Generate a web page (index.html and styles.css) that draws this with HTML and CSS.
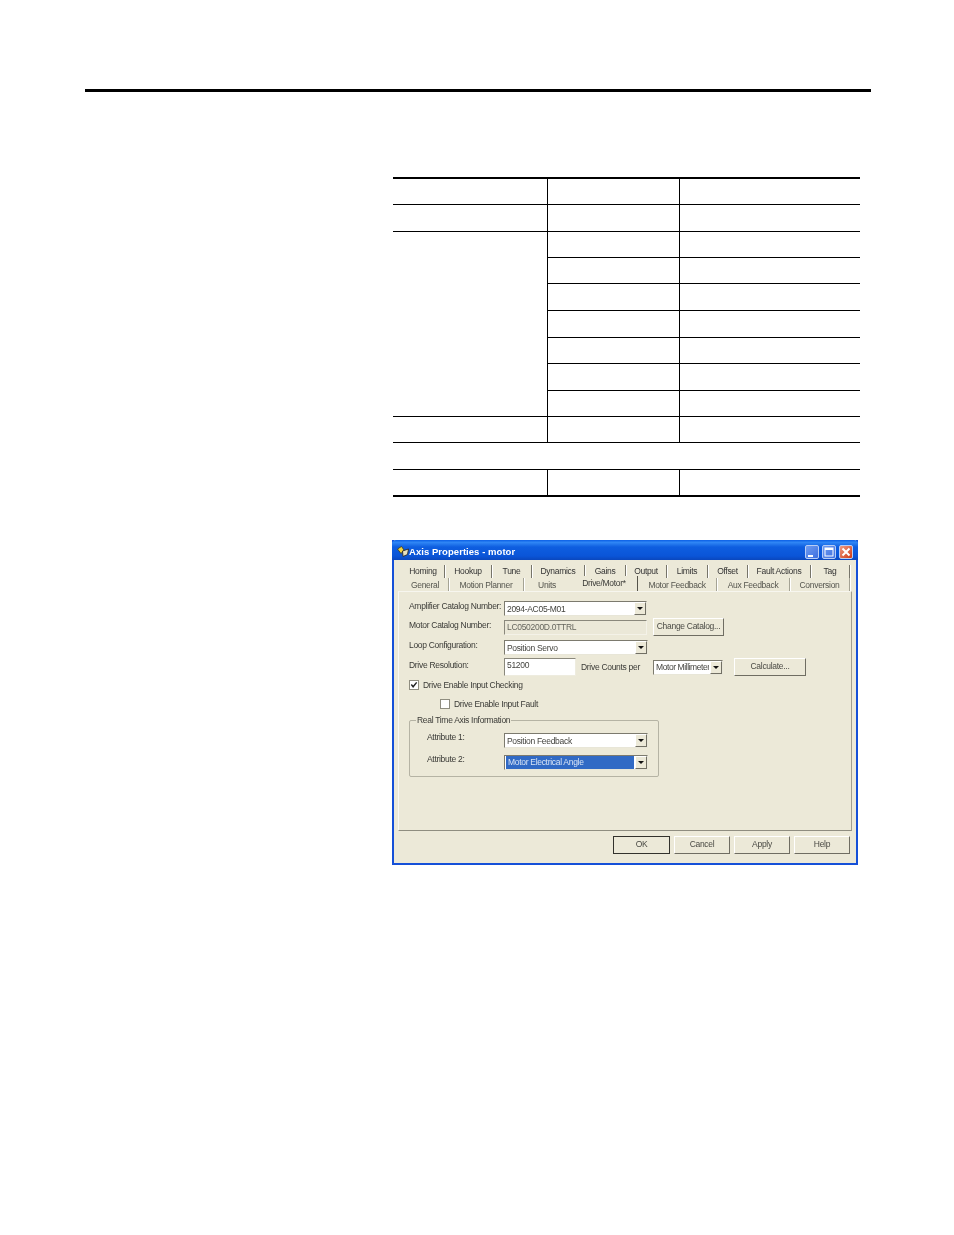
FILE: index.html
```html
<!DOCTYPE html>
<html lang="en">
<head>
<meta charset="utf-8">
<title>Axis Properties</title>
<link rel="stylesheet" href="styles.css">
</head>
<body>
<div class="rule"></div>
<table class="specs">
  <tr class="r26"><td class="c1"></td><td class="c2"></td><td class="c3"></td></tr>
  <tr class="r27"><td></td><td></td><td></td></tr>
  <tr class="r26"><td rowspan="7"></td><td></td><td></td></tr>
  <tr class="r26"><td></td><td></td></tr>
  <tr class="r27"><td></td><td></td></tr>
  <tr class="r27"><td></td><td></td></tr>
  <tr class="r26"><td></td><td></td></tr>
  <tr class="r27"><td></td><td></td></tr>
  <tr class="r26"><td></td><td></td></tr>
  <tr class="r26"><td></td><td></td><td></td></tr>
  <tr class="r27"><td colspan="3"></td></tr>
  <tr class="r27 last"><td></td><td></td><td></td></tr>
</table>

<div class="dialog">
  <div class="titlebar">
    <svg class="appicon" width="12" height="12" viewBox="0 0 12 12"><path d="M0.5 3 L4.5 0.5 L7 4 L4 7.5 Z" fill="#f4d23c" stroke="#3a3a1a" stroke-width=".8"/><path d="M5.5 5 L11.5 3 L10.5 8.5 L6 10.5 Z" fill="#e8e2c0" stroke="#2a2a2a" stroke-width=".9"/></svg>
    <span class="title">Axis Properties - motor</span>
    <div class="winbtns">
      <span class="winbtn"><svg width="14" height="14" viewBox="0 0 14 14"><rect x="3" y="10" width="5" height="2" fill="#fff"/></svg></span>
      <span class="winbtn"><svg width="14" height="14" viewBox="0 0 14 14"><rect x="3" y="3" width="8" height="8" fill="none" stroke="#fff" stroke-width="1"/><rect x="3" y="3" width="8" height="2" fill="#fff"/></svg></span>
      <span class="winbtn close"><svg width="14" height="14" viewBox="0 0 14 14"><path d="M3.5 3.5 L10.5 10.5 M10.5 3.5 L3.5 10.5" stroke="#fff" stroke-width="2"/></svg></span>
    </div>
  </div>
  <div class="client">
    <div class="tabs tabs-top">
      <span class="tab">Homing</span><span class="tab">Hookup</span><span class="tab">Tune</span><span class="tab">Dynamics</span><span class="tab">Gains</span><span class="tab">Output</span><span class="tab">Limits</span><span class="tab">Offset</span><span class="tab">Fault Actions</span><span class="tab">Tag</span>
    </div>
    <div class="tabs tabs-bottom">
      <span class="tab">General</span><span class="tab">Motion Planner</span><span class="tab plain">Units</span><span class="tab active">Drive/Motor*</span><span class="tab">Motor Feedback</span><span class="tab">Aux Feedback</span><span class="tab">Conversion</span>
    </div>
    <div class="panel">
      <div class="row row1">
        <span class="lbl">Amplifier Catalog Number:</span>
        <div class="select w142"><span class="val">2094-AC05-M01</span><span class="arrow"></span></div>
      </div>
      <div class="row row2">
        <span class="lbl">Motor Catalog Number:</span>
        <div class="readonly">LC050200D.0TTRL</div>
        <button class="btn btn-change">Change Catalog...</button>
      </div>
      <div class="row row3">
        <span class="lbl">Loop Configuration:</span>
        <div class="select w143"><span class="val">Position Servo</span><span class="arrow"></span></div>
      </div>
      <div class="row row4">
        <span class="lbl">Drive Resolution:</span>
        <div class="input">51200</div>
        <span class="counts">Drive Counts per</span>
        <div class="select w70"><span class="val tight">Motor Millimeter</span><span class="arrow"></span></div>
        <button class="btn btn-calc">Calculate...</button>
      </div>
      <div class="row row5">
        <span class="check on"><svg width="8" height="8" viewBox="0 0 9 9"><path d="M1.5 4 L3.5 6.5 L7.5 1.5" fill="none" stroke="#222" stroke-width="1.6"/></svg></span>
        <span class="checklbl">Drive Enable Input Checking</span>
      </div>
      <div class="row row6">
        <span class="check"></span>
        <span class="checklbl">Drive Enable Input Fault</span>
      </div>
      <div class="group">
        <span class="legend">Real Time Axis Information</span>
        <div class="row grow1">
          <span class="lbl glbl">Attribute 1:</span>
          <div class="select w143"><span class="val">Position Feedback</span><span class="arrow"></span></div>
        </div>
        <div class="row grow2">
          <span class="lbl glbl">Attribute 2:</span>
          <div class="select w143"><span class="val selected">Motor Electrical Angle</span><span class="arrow"></span></div>
        </div>
      </div>
    </div>
    <div class="buttons">
      <button class="btn act default">OK</button>
      <button class="btn act">Cancel</button>
      <button class="btn act">Apply</button>
      <button class="btn act">Help</button>
    </div>
  </div>
</div>
</body>
</html>
```
FILE: styles.css
```css
html, body { margin: 0; padding: 0; background: #fff; }
body { padding-top: 89px; font-family: "Liberation Sans", Arial, sans-serif; }

.rule { margin-left: 85px; width: 786px; height: 3px; background: #000; }

.specs {
  margin: 85px 0 0 393px;
  width: 467px;
  border-collapse: collapse;
  table-layout: fixed;
  border-top: 2px solid #000;
}
.specs td { padding: 0; border: 1px solid #000; border-left-width: 1px; }
.specs tr td:first-child { border-left: 0; }
.specs tr td:last-child { border-right: 0; }
.specs tr:first-child td { border-top: 2px solid #000; }
.specs .last td { border-bottom: 2px solid #000; }
.specs td[rowspan] { border-right: 1px solid #000; }
.c1 { width: 154px; }
.c2 { width: 131px; }
.r26 { height: 26px; }
.r27 { height: 27px; }

.dialog {
  margin: 43px 0 0 392px;
  width: 466px;
  height: 325px;
  box-sizing: border-box;
  background: #ece9d8;
  border: 2px solid #1550d8;
  border-top: 0;
  font-size: 8.5px;
  letter-spacing: -.3px;
  color: #3a3a36;
  display: flex;
  flex-direction: column;
  filter: blur(.25px);
}

.titlebar {
  height: 20px;
  box-sizing: border-box;
  margin: 0 -2px;
  padding: 3px 5px 0 5px;
  border-radius: 4px 4px 0 0;
  background: linear-gradient(#0a5fe6 0%, #2f86f5 12%, #0e5ee0 35%, #0a55d8 80%, #0a47bd 100%);
  display: flex;
  align-items: center;
  flex: none;
}
.appicon { flex: none; }
.title { color: #fff; font-weight: 700; font-size: 9.5px; letter-spacing: .05px; white-space: nowrap; }
.winbtns { margin-left: auto; display: flex; gap: 3px; }
.winbtn {
  width: 14px; height: 14px;
  border: 1px solid #b8cdf5;
  box-sizing: border-box;
  border-radius: 2px;
  background: linear-gradient(135deg, #6f9cf0, #3d6fe0);
  display: flex;
  align-items: center;
  justify-content: center;
  overflow: hidden;
}
.winbtn svg { flex: none; }
.winbtn.close { background: linear-gradient(135deg, #ee9a80, #cf3a15); }

.client { flex: 1; padding: 5px 0 0 4px; min-height: 0; }

.tabs {
  display: grid;
  margin-left: 4px;
  width: 448px;
  height: 13px;
}
.tabs-top { grid-template-columns: 43px 47px 40px 53px 41px 41px 41px 40px 63px 39px; color: #333; }
.tabs-top .tab { padding-bottom: 1px; box-sizing: border-box; }
.tabs-bottom { grid-template-columns: 47px 75px 47px 67px 79px 73px 60px; color: #55554e; }
.tab {
  display: flex;
  align-items: center;
  justify-content: center;
  white-space: nowrap;
  border-right: 1px solid #77756a;
  box-shadow: 1px 0 0 #fff;
}
.tabs-bottom .tab { border-right-color: #a5a394; }
.tabs-bottom .tab.plain { border-right-color: transparent; box-shadow: none; }
.tabs-bottom .tab.active {
  border-right-color: #55534a;
  background: #ece9d8;
  color: #3a3a36;
  padding-bottom: 1px;
  box-sizing: border-box;
  height: 15px;
  margin-top: -2px;
  box-shadow: none;
}

.panel {
  width: 454px;
  height: 240px;
  box-sizing: border-box;
  padding: 8px 0 0 10px;
  border: 1px solid;
  border-color: #f7f6ef #a09e90 #8f8d80 #faf9f3;
}

.row { display: flex; align-items: center; }
.row1 { height: 17px; }
.row2 { height: 20px; }
.row3 { height: 21px; }
.row4 { height: 18px; }
.row5 { height: 18px; }
.row6 { height: 19px; padding-left: 31px; }
.lbl { width: 95px; flex: none; white-space: nowrap; position: relative; top: -2px; }
.row1 .lbl, .row3 .lbl { top: -3px; }

.select {
  height: 15px;
  box-sizing: border-box;
  flex: none;
  border: 1px solid;
  border-color: #7c7a6e #e8e6d8 #e8e6d8 #7c7a6e;
  background: #fff;
  display: flex;
  align-items: center;
  padding-left: 2px;
}
.w142 { width: 143px; }
.w143 { width: 144px; }
.w70 { width: 70px; }
.val { flex: 1; min-width: 0; white-space: nowrap; overflow: hidden; color: #44443f; }
.val.tight { letter-spacing: -.42px; }
.val.selected { background: #316ac5; color: #d8e4f5; height: 100%; margin-left: -1px; padding-left: 2px; line-height: 13px; }
.arrow {
  width: 12px; height: 13px;
  flex: none;
  margin-left: 1px;
  background: #ece9d8;
  box-sizing: border-box;
  border: 1px solid;
  border-color: #fff #716f64 #716f64 #fff;
  position: relative;
}
.arrow::after {
  content: "";
  position: absolute;
  left: 2px; top: 4px;
  border: 3px solid transparent;
  border-top: 3px solid #111;
  border-bottom: 0;
}

.readonly {
  width: 143px; height: 15px;
  box-sizing: border-box;
  flex: none;
  padding-left: 2px;
  line-height: 12px;
  border: 1px solid;
  border-color: #8a887c #f4f2e8 #f4f2e8 #8a887c;
  background: #ebe8d8;
  color: #66665e;
}
.input {
  width: 72px; height: 18px;
  box-sizing: border-box;
  flex: none;
  padding: 0 2px;
  line-height: 12px;
  border: 1px solid;
  border-color: #8a887c #eeecdf #eeecdf #8a887c;
  background: #fff;
  color: #44443f;
}
.counts { margin-left: 5px; width: 72px; flex: none; white-space: nowrap; }

.btn {
  font: inherit;
  letter-spacing: inherit;
  white-space: nowrap;
  color: #4a4a44;
  padding: 0 0 2px;
  background: #ece9d8;
  box-sizing: border-box;
  border: 1px solid;
  border-color: #fff #6f6d62 #6f6d62 #fff;
  flex: none;
}
.btn-change { width: 71px; height: 18px; margin-left: 6px; }
.btn-calc { width: 72px; height: 18px; margin-left: 11px; }

.check {
  width: 8px; height: 8px;
  flex: none;
  margin-left: 1px;
  background: #fff;
  outline: 1px solid #8f8d80;
  display: flex;
}
.check svg { display: block; }
.checklbl { margin-left: 5px; white-space: nowrap; }

.group {
  margin-top: 7px;
  width: 250px;
  height: 57px;
  box-sizing: border-box;
  border: 1px solid #b5b3a4;
  border-radius: 2px;
  position: relative;
  padding: 12px 0 0 17px;
}
.legend {
  position: absolute;
  left: 6px; top: -6px;
  background: #ece9d8;
  padding: 0 1px;
  white-space: nowrap;
}
.glbl { width: 77px; top: -4px; }
.grow1 { height: 15px; }
.grow2 { height: 15px; margin-top: 7px; }

.buttons {
  display: flex;
  gap: 4px;
  margin: 5px 0 0 215px;
}
.btn.act { width: 56px; height: 18px; }
.btn.default { border-color: #33322c; width: 57px; }
```
